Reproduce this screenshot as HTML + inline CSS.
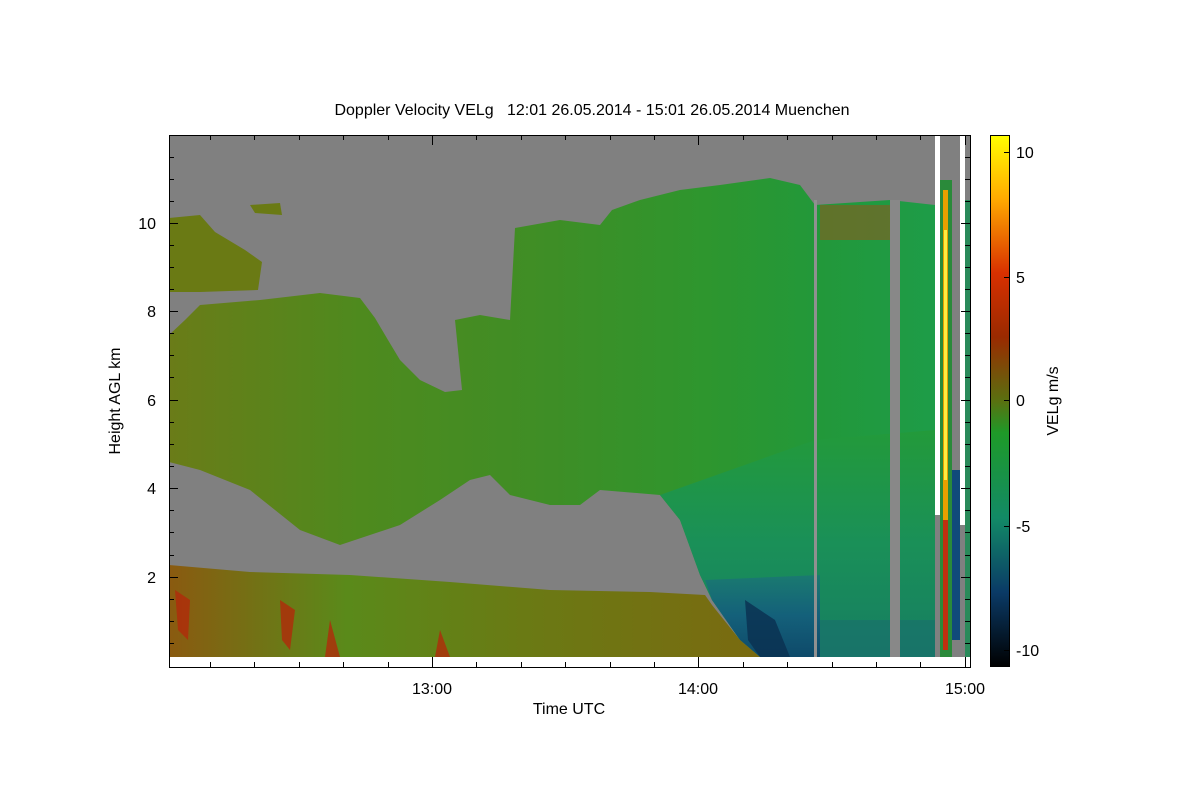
<!DOCTYPE html>
<html><head><meta charset="utf-8"><style>
html,body{margin:0;padding:0;background:#fff;}
svg{display:block;font-family:"Liberation Sans",sans-serif;}
</style></head><body>
<svg width="1200" height="800" viewBox="0 0 1200 800" xmlns="http://www.w3.org/2000/svg">
<defs>
<linearGradient id="cl" x1="0" y1="0" x2="1" y2="0">
<stop offset="0" stop-color="#6a7c18"/><stop offset="0.25" stop-color="#4e8a1e"/>
<stop offset="0.5" stop-color="#3e8e26"/><stop offset="0.7" stop-color="#2e962e"/>
<stop offset="0.85" stop-color="#22983a"/><stop offset="1" stop-color="#1e9c48"/></linearGradient>
<linearGradient id="tl" x1="0" y1="0" x2="0" y2="1">
<stop offset="0" stop-color="#239a3a"/><stop offset="0.5" stop-color="#1a9058"/><stop offset="1" stop-color="#167e62"/></linearGradient>
<linearGradient id="db" x1="0" y1="0" x2="0" y2="1">
<stop offset="0" stop-color="#1a7a70"/><stop offset="0.5" stop-color="#14607a"/><stop offset="1" stop-color="#0e4a6a"/></linearGradient>
<linearGradient id="low" x1="0" y1="0" x2="1" y2="0">
<stop offset="0" stop-color="#8a5a10"/><stop offset="0.3" stop-color="#5a8a1a"/><stop offset="0.6" stop-color="#6a7a14"/><stop offset="1" stop-color="#7a6a10"/></linearGradient>
<linearGradient id="cb" x1="0" y1="0" x2="0" y2="1">
<stop offset="0" stop-color="#ffff00"/><stop offset="0.12" stop-color="#ffaa00"/>
<stop offset="0.26" stop-color="#d83000"/><stop offset="0.38" stop-color="#9a2a00"/>
<stop offset="0.5" stop-color="#5a7010"/><stop offset="0.56" stop-color="#1e9a28"/>
<stop offset="0.72" stop-color="#128a66"/><stop offset="0.86" stop-color="#0a3a66"/>
<stop offset="1" stop-color="#000000"/></linearGradient>
</defs>
<text x="592" y="115" font-size="16" text-anchor="middle" xml:space="preserve" style="white-space:pre">Doppler Velocity VELg   12:01 26.05.2014 - 15:01 26.05.2014 Muenchen</text>
<rect x="169" y="135" width="801" height="522" fill="#808080"/>
<rect x="169" y="657" width="801" height="10" fill="#fff"/>
<path d="M169,218 L200,215 L215,232 L245,250 L262,262 L258,290 L200,292 L169,292 Z" fill="#6a7a14"/>
<path d="M250,205 L280,203 L282,215 L255,213 Z" fill="#6a7a14"/>
<path d="M169,335 L185,320 L200,305 L260,300 L320,293 L360,298 L375,318 L388,340 L400,360 L420,380 L445,392 L462,390 L455,320 L480,315 L510,320 L515,228 L560,220 L600,225 L612,210 L640,200 L680,190 L720,185 L770,178 L800,185 L815,205 L890,200 L935,205 L935,657 L760,657 L740,640 L712,600 L700,575 L680,520 L660,495 L600,490 L580,505 L550,505 L510,495 L490,475 L470,480 L440,500 L400,525 L340,545 L300,530 L250,490 L200,470 L169,462 Z" fill="url(#cl)"/>
<path d="M660,495 L815,440 L935,430 L935,657 L760,657 L740,640 L712,600 L700,575 L680,520 Z" fill="url(#tl)"/>
<rect x="820" y="205" width="70" height="35" fill="#8a5a20" opacity="0.6"/>
<path d="M705,580 L820,575 L820,657 L760,657 L740,640 L712,600 Z" fill="url(#db)"/>
<path d="M745,600 L775,620 L790,657 L760,657 L748,640 Z" fill="#0a3050" opacity="0.8"/>
<rect x="820" y="620" width="115" height="37" fill="#1a6a70" opacity="0.5"/>
<path d="M169,565 L250,572 L350,575 L450,582 L550,590 L650,592 L705,595 L712,605 L740,640 L760,657 L169,657 Z" fill="url(#low)"/>
<path d="M175,590 L190,600 L188,640 L178,630 Z M280,600 L295,610 L290,650 L282,640 Z M330,620 L340,657 L325,657 Z M440,630 L450,657 L435,657 Z" fill="#b02a0a" opacity="0.8"/>
<rect x="814" y="200" width="3" height="457" fill="#909090"/>
<rect x="890" y="200" width="10" height="457" fill="#888"/>
<rect x="935" y="135" width="5" height="380" fill="#fff"/>
<rect x="960" y="135" width="5" height="390" fill="#fff"/>
<rect x="940" y="180" width="12" height="477" fill="#2a8a3a"/>
<rect x="943" y="190" width="5" height="330" fill="#e8a000"/>
<rect x="944" y="230" width="3" height="250" fill="#ffee40"/>
<rect x="943" y="520" width="5" height="130" fill="#c03010"/>
<rect x="952" y="470" width="8" height="170" fill="#104a7a"/>
<rect x="965" y="200" width="5" height="457" fill="#2a8a5a"/>
<rect x="169.5" y="135.5" width="801" height="532" fill="none" stroke="#000" stroke-width="1"/>
<g stroke="#000" stroke-width="1">
<path d="M169,223.5h9M169,311.5h9M169,400.5h9M169,488.5h9M169,577.5h9"/>
<path d="M169,157.5h5M169,179.5h5M169,201.5h5M169,245.5h5M169,267.5h5M169,289.5h5M169,333.5h5M169,355.5h5M169,377.5h5M169,422.5h5M169,444.5h5M169,466.5h5M169,510.5h5M169,532.5h5M169,555.5h5M169,599.5h5M169,621.5h5M169,643.5h5"/>
<path d="M970,223.5h-9M970,311.5h-9M970,400.5h-9M970,488.5h-9M970,577.5h-9"/>
<path d="M970,157.5h-5M970,179.5h-5M970,201.5h-5M970,245.5h-5M970,267.5h-5M970,289.5h-5M970,333.5h-5M970,355.5h-5M970,377.5h-5M970,422.5h-5M970,444.5h-5M970,466.5h-5M970,510.5h-5M970,532.5h-5M970,555.5h-5M970,599.5h-5M970,621.5h-5M970,643.5h-5"/>
<path d="M432.5,667v-10M698.5,667v-10M965.5,667v-10M432.5,135v10M698.5,135v10M965.5,135v10"/>
<path d="M210.5,667v-5M254.5,667v-5M299.5,667v-5M343.5,667v-5M388.5,667v-5M476.5,667v-5M521.5,667v-5M565.5,667v-5M610.5,667v-5M654.5,667v-5M743.5,667v-5M787.5,667v-5M832.5,667v-5M876.5,667v-5M920.5,667v-5"/>
<path d="M210.5,135v5M254.5,135v5M299.5,135v5M343.5,135v5M388.5,135v5M476.5,135v5M521.5,135v5M565.5,135v5M610.5,135v5M654.5,135v5M743.5,135v5M787.5,135v5M832.5,135v5M876.5,135v5M920.5,135v5"/>
</g>
<g font-size="16" text-anchor="end">
<text x="156" y="229">10</text><text x="156" y="317">8</text><text x="156" y="406">6</text><text x="156" y="494">4</text><text x="156" y="583">2</text>
</g>
<g font-size="16" text-anchor="middle">
<text x="432" y="694">13:00</text><text x="698" y="694">14:00</text><text x="965" y="694">15:00</text>
<text x="569" y="714">Time UTC</text>
</g>
<text transform="translate(120,401) rotate(-90)" font-size="16" text-anchor="middle">Height AGL km</text>
<rect x="990" y="135" width="20" height="532" fill="url(#cb)"/>
<rect x="990.5" y="135.5" width="19" height="531" fill="none" stroke="#000"/>
<g stroke="#000"><path d="M1010,152.5h-6M1010,277.5h-6M1010,400.5h-6M1010,526.5h-6M1010,650.5h-6"/></g>
<g font-size="16">
<text x="1016" y="158">10</text><text x="1016" y="283">5</text><text x="1016" y="406">0</text><text x="1016" y="532">-5</text><text x="1016" y="656">-10</text>
</g>
<text transform="translate(1058,401) rotate(-90)" font-size="16" text-anchor="middle">VELg m/s</text>
</svg>
</body></html>
